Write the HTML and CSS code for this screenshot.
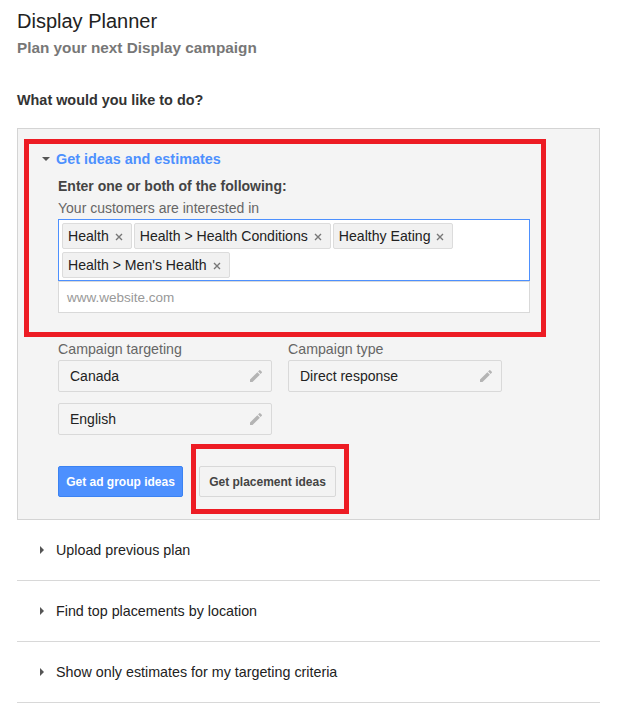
FILE: index.html
```html
<!DOCTYPE html>
<html>
<head>
<meta charset="utf-8">
<link rel="stylesheet" href="styles.css">
</head>
<body>
<div class="page">
  <h1 class="title">Display Planner</h1>
  <div class="subtitle">Plan your next Display campaign</div>
  <div class="question">What would you like to do?</div>

  <div class="panel">
    <div class="section-head">
      <span class="tri-down"></span>
      <span class="section-link">Get ideas and estimates</span>
    </div>
    <div class="inner">
      <div class="enter">Enter one or both of the following:</div>
      <div class="hint">Your customers are interested in</div>
      <div class="tagbox">
        <span class="tag">Health<svg class="x" viewBox="0 0 8 8"><path d="M1 1L7 7M7 1L1 7"/></svg></span>
        <span class="tag">Health &gt; Health Conditions<svg class="x" viewBox="0 0 8 8"><path d="M1 1L7 7M7 1L1 7"/></svg></span>
        <span class="tag">Healthy Eating<svg class="x" viewBox="0 0 8 8"><path d="M1 1L7 7M7 1L1 7"/></svg></span>
        <span class="tag">Health &gt; Men's Health<svg class="x" viewBox="0 0 8 8"><path d="M1 1L7 7M7 1L1 7"/></svg></span>
      </div>
      <div class="urlbox">www.website.com</div>

      <div class="fields">
        <div class="col">
          <div class="label">Campaign targeting</div>
          <div class="select"><span>Canada</span><svg class="pencil" viewBox="0 0 24 24"><path d="M3 17.25V21h3.75L17.81 9.94l-3.75-3.75L3 17.25zM20.71 7.04a1 1 0 000-1.41l-2.34-2.34a1 1 0 00-1.41 0l-1.83 1.83 3.75 3.75 1.83-1.83z"/></svg></div>
          <div class="select"><span>English</span><svg class="pencil" viewBox="0 0 24 24"><path d="M3 17.25V21h3.75L17.81 9.94l-3.75-3.75L3 17.25zM20.71 7.04a1 1 0 000-1.41l-2.34-2.34a1 1 0 00-1.41 0l-1.83 1.83 3.75 3.75 1.83-1.83z"/></svg></div>
        </div>
        <div class="col">
          <div class="label">Campaign type</div>
          <div class="select"><span>Direct response</span><svg class="pencil" viewBox="0 0 24 24"><path d="M3 17.25V21h3.75L17.81 9.94l-3.75-3.75L3 17.25zM20.71 7.04a1 1 0 000-1.41l-2.34-2.34a1 1 0 00-1.41 0l-1.83 1.83 3.75 3.75 1.83-1.83z"/></svg></div>
        </div>
      </div>

      <div class="buttons">
        <button class="btn btn-blue">Get ad group ideas</button>
        <button class="btn btn-gray">Get placement ideas</button>
      </div>
    </div>
  </div>

  <div class="row"><span class="tri-right"></span><span>Upload previous plan</span></div>
  <div class="row"><span class="tri-right"></span><span>Find top placements by location</span></div>
  <div class="row"><span class="tri-right"></span><span>Show only estimates for my targeting criteria</span></div>

  <div class="mark mark-ideas"></div>
  <div class="mark mark-place"></div>
</div>
</body>
</html>
```

FILE: styles.css
```css
html, body {
  margin: 0;
  padding: 0;
  background: #fff;
}
body {
  font-family: Arial, "Liberation Sans", sans-serif;
  color: #222;
}
.page {
  position: relative;
  width: 583px;
  margin-left: 17px;
  padding-top: 9px;
}
.title {
  margin: 0;
  font-size: 20px;
  font-weight: normal;
  line-height: 24px;
  color: #222;
}
.subtitle {
  margin-top: 5px;
  font-size: 15.3px;
  font-weight: bold;
  line-height: 20px;
  color: #777;
}
.question {
  margin-top: 33px;
  font-size: 14.4px;
  font-weight: bold;
  line-height: 18px;
  color: #333;
}
.panel {
  margin-top: 19px;
  height: 390px;
  border: 1px solid #d4d4d4;
  background: #f4f4f4;
}
.section-head {
  display: flex;
  align-items: center;
  height: 18px;
  margin-top: 21px;
  padding-left: 24px;
}
.tri-down {
  width: 0;
  height: 0;
  border-left: 4px solid transparent;
  border-right: 4px solid transparent;
  border-top: 4px solid #555;
  margin-right: 6px;
}
.section-link {
  font-size: 14.4px;
  font-weight: bold;
  color: #4d90fe;
}
.inner {
  padding-left: 40px;
  width: 472px;
}
.enter {
  margin-top: 9px;
  font-size: 14px;
  font-weight: bold;
  line-height: 18px;
  color: #444;
}
.hint {
  margin-top: 4px;
  font-size: 14px;
  line-height: 18px;
  color: #666;
}
.tagbox {
  margin-top: 2px;
  box-sizing: border-box;
  height: 62px;
  border: 1px solid #4d90fe;
  background: #fff;
  padding: 3px 3px 0 3px;
  display: flex;
  flex-wrap: wrap;
  align-content: flex-start;
  gap: 3px 2px;
}
.tag {
  box-sizing: border-box;
  height: 26px;
  display: inline-flex;
  align-items: center;
  padding: 0 8px 0 5px;
  border: 1px solid #dcdcdc;
  border-radius: 2px;
  background: #f1f1f1;
  font-size: 14.1px;
  color: #222;
}
.x {
  width: 8px;
  height: 8px;
  margin-left: 6px;
  margin-top: 2px;
  stroke: #777;
  stroke-width: 1.4;
  fill: none;
}
.urlbox {
  box-sizing: border-box;
  height: 32px;
  margin-top: 0;
  border: 1px solid #d9d9d9;
  background: #fff;
  padding-left: 8px;
  display: flex;
  align-items: center;
  font-size: 13.5px;
  color: #999;
}
.fields {
  display: flex;
  gap: 16px;
  margin-top: 27px;
}
.col {
  width: 214px;
  display: flex;
  flex-direction: column;
  gap: 11px;
}
.label {
  font-size: 14.2px;
  line-height: 18px;
  color: #666;
  margin-bottom: -9px;
}
.select {
  box-sizing: border-box;
  height: 32px;
  border: 1px solid #d9d9d9;
  border-radius: 2px;
  background: #f4f4f4;
  display: flex;
  align-items: center;
  justify-content: space-between;
  padding: 0 7px 0 11px;
  font-size: 14px;
  color: #222;
}
.pencil {
  width: 16px;
  height: 16px;
  fill: #b4b4b4;
}
.buttons {
  display: flex;
  gap: 16px;
  margin-top: 31px;
}
.btn {
  box-sizing: border-box;
  height: 31px;
  font-family: Arial, "Liberation Sans", sans-serif;
  font-size: 12px;
  font-weight: bold;
  border-radius: 2px;
  padding: 0;
  white-space: nowrap;
}
.btn-blue {
  width: 125px;
  background: #4d90fe;
  border: 1px solid #3b82f2;
  color: #fff;
}
.btn-gray {
  width: 137px;
  background: #f3f3f3;
  border: 1px solid #d8d8d8;
  color: #444;
}
.row {
  box-sizing: border-box;
  height: 61px;
  border-bottom: 1px solid #d8d8d8;
  display: flex;
  align-items: center;
  padding-left: 23px;
  font-size: 14.3px;
  color: #222;
}
.tri-right {
  width: 0;
  height: 0;
  border-top: 4px solid transparent;
  border-bottom: 4px solid transparent;
  border-left: 4px solid #555;
  margin-right: 12px;
}
.mark {
  position: absolute;
  box-sizing: border-box;
  border: 5px solid #ed1c24;
}
.mark-ideas {
  left: 7px;
  top: 139px;
  width: 522px;
  height: 198px;
}
.mark-place {
  left: 174px;
  top: 444px;
  width: 158px;
  height: 70px;
}
```
